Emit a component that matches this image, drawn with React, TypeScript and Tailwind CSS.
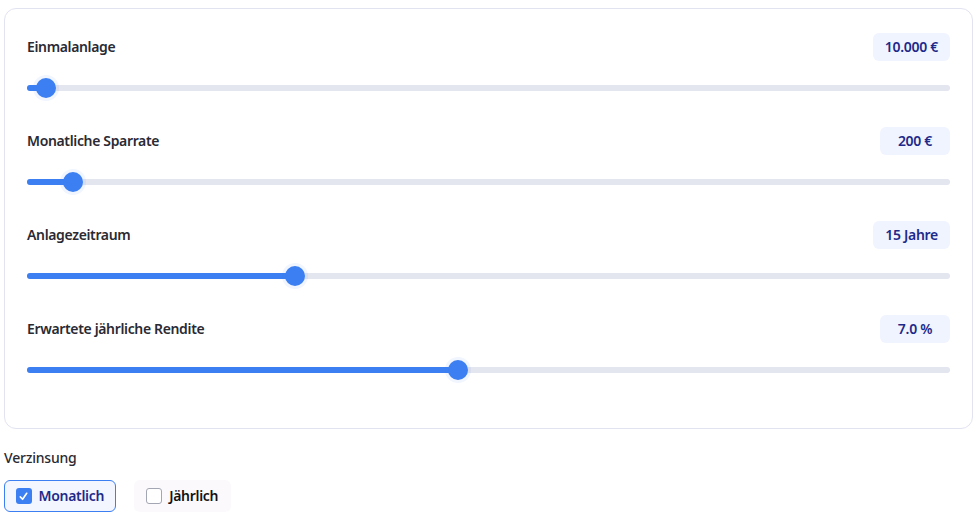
import React from 'react';

interface SliderRowProps {
  label: string;
  value: string;
  percent: number;
}

const SliderRow: React.FC<SliderRowProps> = ({ label, value, percent }) => {
  // thumb center = r + (w - 2r) * p, r = 10px
  const pos = 'calc(10px + (100% - 20px) * ' + percent + ')';
  return (
    <div>
      <div className="flex items-center justify-between h-7">
        <span className="text-sm font-semibold tracking-[-0.35px] text-[#2a2a33]">{label}</span>
        <span className="min-w-[70px] h-7 px-3 flex items-center justify-center rounded-md bg-[#f0f4ff] text-sm font-semibold tracking-[-0.3px] text-[#1e2a8a]">
          {value}
        </span>
      </div>
      <div className="relative h-5 mt-[17px]">
        <div className="absolute left-0 right-0 top-[7px] h-[6px] rounded-full bg-[#e3e5ef]" />
        <div className="absolute left-0 top-[7px] h-[6px] rounded-full bg-[#3b7ff2]" style={{ width: pos }} />
        <div
          className="absolute top-0 w-5 h-5 -ml-[10px] rounded-full bg-[#3b7ff2] shadow-[0_0_0_3px_rgba(59,127,242,0.08)]"
          style={{ left: pos }}
        />
      </div>
    </div>
  );
};

export default function App() {
  return (
    <div className="px-1 pt-2 bg-white min-h-screen" style={{ fontFamily: '"Noto Sans", "Open Sans", sans-serif' }}>
      <div className="border border-[#e2e3f1] rounded-xl px-[22px] pt-6 pb-[48px] flex flex-col gap-[29px]">
        <SliderRow label="Einmalanlage" value="10.000 €" percent={0.01} />
        <SliderRow label="Monatliche Sparrate" value="200 €" percent={0.04} />
        <SliderRow label="Anlagezeitraum" value="15 Jahre" percent={14 / 49} />
        <SliderRow label="Erwartete jährliche Rendite" value="7.0 %" percent={7 / 15} />
      </div>
      <div className="mt-[19px]">
        <div className="text-sm font-medium tracking-[-0.2px] text-[#2a2a33]">Verzinsung</div>
        <div className="flex gap-[18px] mt-[12px]">
          <button className="h-8 flex items-center gap-[7px] pl-[10.5px] pr-[11px] rounded-md border-[1.5px] border-[#3b7ff2] bg-[#f3f6ff]">
            <span className="w-4 h-4 rounded-[3px] bg-[#3b7ff2] flex items-center justify-center">
              <svg width="11" height="11" viewBox="0 0 12 12" fill="none">
                <path d="M2.5 6.5 L5 9 L9.5 2.5" stroke="white" strokeWidth="1.8" strokeLinecap="round" strokeLinejoin="round" />
              </svg>
            </span>
            <span className="text-sm font-semibold tracking-[-0.3px] text-[#1e2a8a]">Monatlich</span>
          </button>
          <button className="h-8 flex items-center gap-[7px] pl-3 pr-[13px] rounded-md bg-[#fbf9fc]">
            <span className="w-4 h-4 rounded-[3px] border border-[#a3a7b3] bg-white" />
            <span className="text-sm font-semibold tracking-[-0.3px] text-[#111]">Jährlich</span>
          </button>
        </div>
      </div>
    </div>
  );
}
